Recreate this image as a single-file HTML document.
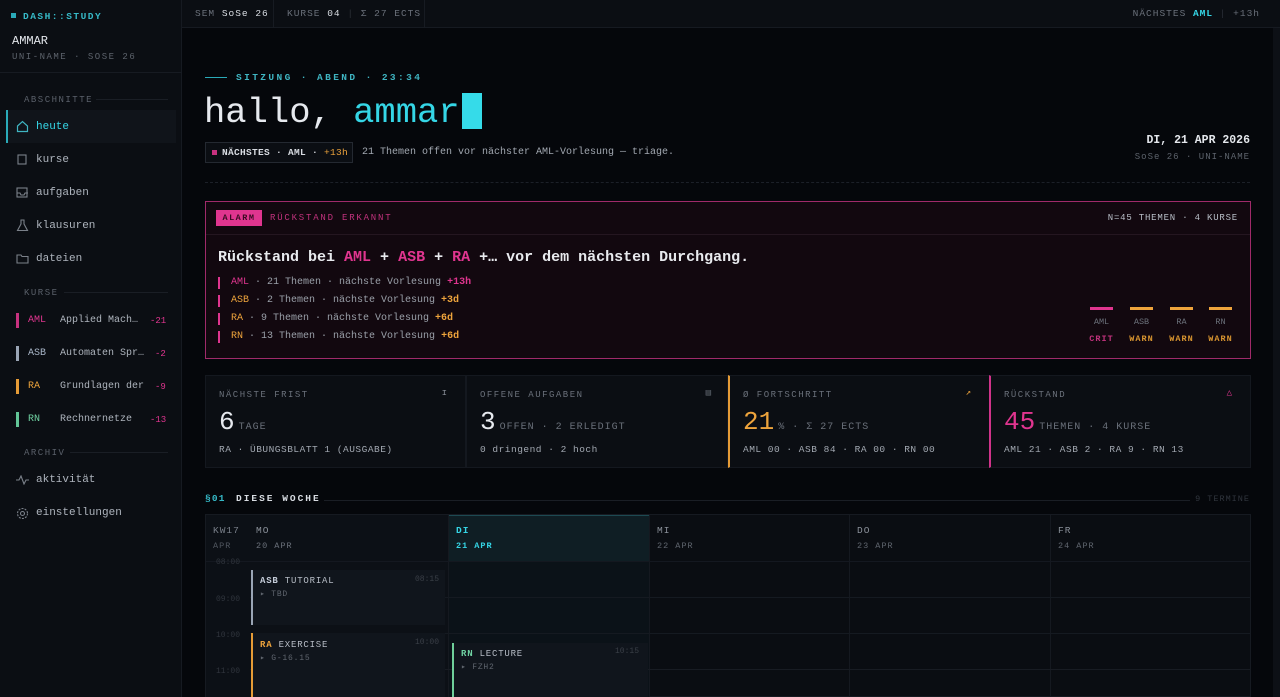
<!DOCTYPE html>
<html><head><meta charset="utf-8"><style>
*{margin:0;padding:0;box-sizing:border-box}
body{width:1280px;height:697px;overflow:hidden;background:#05070b;font-family:"Liberation Mono",monospace;color:#c9ced6;position:relative}
.a{position:absolute;white-space:nowrap}
.sb{left:0;top:0;width:182px;height:697px;background:#0b0e13;border-right:1px solid #161a21}
.lbl{font-size:9px;letter-spacing:1.5px;color:#5a606a}
.nav{font-size:11px;color:#aeb4bd}
.cy{color:#35d6e6}.pk{color:#e0358f}.or{color:#eea43c}.gr{color:#6fd2a2}.gy{color:#8a9099}.dg{color:#5f656e}
.card{background:#0b0e13;border:1px solid #14181f;height:93px;top:375px}
.card .t{position:absolute;left:13px;top:14px;font-size:9px;letter-spacing:1.5px;color:#6a707a}
.card .n{position:absolute;left:13px;top:31px;font-size:26px}
.card .u{font-size:10px;letter-spacing:1px;color:#6a707a;margin-left:4px}
.card .b{position:absolute;left:13px;top:68px;font-size:9.5px;color:#a2a8b1;letter-spacing:.5px}
.ev{background:#10151c;font-size:9px;letter-spacing:.8px}
</style></head><body>
<div class="a sb"></div>
<div class="a" style="left:11px;top:13px;width:5px;height:5px;background:#2aa9b8"></div>
<div class="a cy" style="left:23px;top:11px;font-size:9.5px;letter-spacing:1.5px;font-weight:bold;color:#36b9c7">DASH::STUDY</div>
<div class="a" style="left:12px;top:34px;font-size:12px;color:#e4e7ec">AMMAR</div>
<div class="a lbl" style="left:12px;top:52px;color:#5d636c">UNI-NAME · SOSE 26</div>
<div class="a" style="left:0;top:72px;width:182px;height:1px;background:#171b22"></div>
<div class="a lbl" style="left:24px;top:95px">ABSCHNITTE</div><div class="a" style="left:96px;top:99px;width:72px;height:1px;background:#1a1e25"></div>
<div class="a" style="left:6px;top:110px;width:170px;height:33px;background:#10141a;border-left:2px solid #2aaab8"></div>
<svg class="a" style="left:16px;top:120px" width="13" height="13" viewBox="0 0 13 13" fill="none" stroke="#3fb5c2" stroke-width="1.2"><path d="M1.5 6L6.5 1.5 11.5 6V11.5H1.5Z"/></svg>
<div class="a nav cy" style="left:36px;top:121px">heute</div>
<svg class="a" style="left:17px;top:154px" width="11" height="12" fill="none" stroke="#7b818a" stroke-width="1.1"><rect x="1" y="1" width="8" height="9"/></svg>
<div class="a nav" style="left:36px;top:154px">kurse</div>
<svg class="a" style="left:16px;top:187px" width="13" height="12" fill="none" stroke="#7b818a" stroke-width="1.1"><rect x="1" y="1" width="10" height="9"/><path d="M1 6h3l1 2h3l1-2h3"/></svg>
<div class="a nav" style="left:36px;top:187px">aufgaben</div>
<svg class="a" style="left:16px;top:219px" width="13" height="13" fill="none" stroke="#7b818a" stroke-width="1.1"><path d="M4.5 1h4M5 1v4L1.5 11.5h10L8 5V1"/></svg>
<div class="a nav" style="left:36px;top:220px">klausuren</div>
<svg class="a" style="left:16px;top:253px" width="13" height="12" fill="none" stroke="#7b818a" stroke-width="1.1"><path d="M1 2h4l1 1.5h6V10H1Z"/></svg>
<div class="a nav" style="left:36px;top:253px">dateien</div>
<div class="a lbl" style="left:24px;top:288px">KURSE</div><div class="a" style="left:64px;top:292px;width:104px;height:1px;background:#1a1e25"></div>
<div class="a" style="left:16px;top:313px;width:3px;height:15px;background:#c8317f"></div>
<div class="a pk" style="left:28px;top:315px;font-size:10px">AML</div><div class="a nav" style="left:60px;top:315px;font-size:10px">Applied Mach…</div><div class="a pk" style="left:150px;top:316px;font-size:9px">-21</div>
<div class="a" style="left:16px;top:346px;width:3px;height:15px;background:#9aa5b5"></div>
<div class="a" style="left:28px;top:348px;font-size:10px;color:#a9b6c8">ASB</div><div class="a nav" style="left:60px;top:348px;font-size:10px">Automaten Spr…</div><div class="a pk" style="left:155px;top:349px;font-size:9px">-2</div>
<div class="a" style="left:16px;top:379px;width:3px;height:15px;background:#e59b36"></div>
<div class="a or" style="left:28px;top:381px;font-size:10px">RA</div><div class="a nav" style="left:60px;top:381px;font-size:10px">Grundlagen der</div><div class="a pk" style="left:155px;top:382px;font-size:9px">-9</div>
<div class="a" style="left:16px;top:412px;width:3px;height:15px;background:#62c597"></div>
<div class="a gr" style="left:28px;top:414px;font-size:10px">RN</div><div class="a nav" style="left:60px;top:414px;font-size:10px">Rechnernetze</div><div class="a pk" style="left:150px;top:415px;font-size:9px">-13</div>
<div class="a lbl" style="left:24px;top:448px">ARCHIV</div><div class="a" style="left:70px;top:452px;width:98px;height:1px;background:#1a1e25"></div>
<svg class="a" style="left:16px;top:475px" width="13" height="10" fill="none" stroke="#7b818a" stroke-width="1.1"><path d="M0 5h3l2-4 3 8 2-4h3"/></svg>
<div class="a nav" style="left:36px;top:474px">aktivität</div>
<svg class="a" style="left:16px;top:507px" width="13" height="13" fill="none" stroke="#7b818a" stroke-width="1.1"><circle cx="6.5" cy="6.5" r="2"/><circle cx="6.5" cy="6.5" r="5" stroke-dasharray="2 1.2"/></svg>
<div class="a nav" style="left:36px;top:507px">einstellungen</div>

<!-- topbar -->
<div class="a" style="left:182px;top:0;width:1098px;height:28px;background:#0b0e13;border-bottom:1px solid #161a21"></div>
<div class="a" style="left:195px;top:8px;font-size:9.5px;letter-spacing:1px;color:#6a707a">SEM <span style="color:#d8dce2">SoSe 26</span></div>
<div class="a" style="left:273px;top:0;width:1px;height:28px;background:#171b22"></div>
<div class="a" style="left:287px;top:8px;font-size:9.5px;letter-spacing:1px;color:#6a707a">KURSE <span style="color:#d8dce2">04</span> <span style="color:#2a2f37">|</span> Σ 27 ECTS</div>
<div class="a" style="left:424px;top:0;width:1px;height:28px;background:#171b22"></div>
<div class="a" style="right:20px;top:8px;font-size:9.5px;letter-spacing:1px;color:#6a707a">NÄCHSTES <span class="cy" style="font-weight:bold">AML</span> <span style="color:#2a2f37">|</span> +13h</div>
<div class="a" style="left:1273px;top:28px;width:7px;height:669px;background:#0d1016"></div>

<!-- hero -->
<div class="a" style="left:205px;top:77px;width:22px;height:1px;background:#2aaab8"></div>
<div class="a" style="left:236px;top:72px;font-size:9.5px;letter-spacing:2.4px;color:#3fb5c2;font-weight:bold">SITZUNG · ABEND · 23:34</div>
<div class="a" style="left:204px;top:92px;font-size:35.5px;color:#e6e9ee;letter-spacing:0">hallo, <span class="cy">ammar</span></div>
<div class="a" style="left:462px;top:93px;width:20px;height:36px;background:#35dbe9"></div>
<div class="a" style="left:205px;top:142px;width:148px;height:21px;border:1px solid #242931;background:#0b0e13"></div>
<div class="a" style="left:212px;top:150px;width:5px;height:5px;background:#c8317f"></div>
<div class="a" style="left:222px;top:147px;font-size:9.5px;color:#d8dce2;font-weight:bold;letter-spacing:.3px">NÄCHSTES · AML · <span class="or" style="font-weight:normal">+13h</span></div>
<div class="a" style="left:362px;top:147px;font-size:10px;color:#a2a8b1">21 Themen offen vor nächster AML-Vorlesung — triage.</div>
<div class="a" style="right:30px;top:134px;font-size:11.5px;color:#e4e7ec;font-weight:bold">DI, 21 APR 2026</div>
<div class="a" style="right:30px;top:152px;font-size:9px;letter-spacing:1px;color:#5d636c">SoSe 26 · UNI-NAME</div>
<div class="a" style="left:205px;top:182px;width:1045px;height:0;border-top:1px dashed #1c2028"></div>

<!-- alarm -->
<div class="a" style="left:205px;top:201px;width:1046px;height:158px;border:1px solid #a02a6a;background:#12080f"></div>
<div class="a" style="left:206px;top:234px;width:1044px;height:1px;background:#241620"></div>
<div class="a" style="left:216px;top:210px;width:46px;height:16px;background:#e0358f;font-size:8.5px;letter-spacing:1.5px;color:#3a0a22;text-align:center;line-height:16px;font-weight:bold">ALARM</div>
<div class="a" style="left:270px;top:213px;font-size:9px;letter-spacing:1.8px;color:#c0327c">RÜCKSTAND ERKANNT</div>
<div class="a" style="right:42px;top:213px;font-size:9px;letter-spacing:.8px;color:#b8bec7">N=45 THEMEN · 4 KURSE</div>
<div class="a" style="left:218px;top:249px;font-size:15px;font-weight:bold;color:#e8eaee">Rückstand bei <span class="pk">AML</span> + <span class="pk">ASB</span> + <span class="pk">RA</span> +… vor dem nächsten Durchgang.</div>
<div class="a" style="left:218px;top:277px;width:2px;height:12px;background:#e0358f"></div>
<div class="a" style="left:231px;top:277px;font-size:10px;color:#9aa0a9"><span class="pk">AML</span> · 21 Themen · nächste Vorlesung <span class="pk" style="font-weight:bold">+13h</span></div>
<div class="a" style="left:218px;top:295px;width:2px;height:12px;background:#e0358f"></div>
<div class="a" style="left:231px;top:295px;font-size:10px;color:#9aa0a9"><span class="or">ASB</span> · 2 Themen · nächste Vorlesung <span class="or" style="font-weight:bold">+3d</span></div>
<div class="a" style="left:218px;top:313px;width:2px;height:12px;background:#e0358f"></div>
<div class="a" style="left:231px;top:313px;font-size:10px;color:#9aa0a9"><span class="or">RA</span> · 9 Themen · nächste Vorlesung <span class="or" style="font-weight:bold">+6d</span></div>
<div class="a" style="left:218px;top:331px;width:2px;height:12px;background:#e0358f"></div>
<div class="a" style="left:231px;top:331px;font-size:10px;color:#9aa0a9"><span class="or">RN</span> · 13 Themen · nächste Vorlesung <span class="or" style="font-weight:bold">+6d</span></div>
<div class="a" style="left:1090px;top:307px;width:23px;height:3px;background:#e0358f"></div>
<div class="a" style="left:1130px;top:307px;width:23px;height:3px;background:#eea43c"></div>
<div class="a" style="left:1170px;top:307px;width:23px;height:3px;background:#eea43c"></div>
<div class="a" style="left:1209px;top:307px;width:23px;height:3px;background:#eea43c"></div>
<div class="a" style="left:1090px;top:317px;width:23px;text-align:center;font-size:8.5px;color:#6a707a">AML</div>
<div class="a" style="left:1130px;top:317px;width:23px;text-align:center;font-size:8.5px;color:#6a707a">ASB</div>
<div class="a" style="left:1170px;top:317px;width:23px;text-align:center;font-size:8.5px;color:#6a707a">RA</div>
<div class="a" style="left:1209px;top:317px;width:23px;text-align:center;font-size:8.5px;color:#6a707a">RN</div>
<div class="a pk" style="left:1086px;top:334px;width:31px;text-align:center;font-size:8.5px;letter-spacing:1px;font-weight:bold;color:#c0327c">CRIT</div>
<div class="a or" style="left:1126px;top:334px;width:31px;text-align:center;font-size:8.5px;letter-spacing:1px;font-weight:bold;color:#d89530">WARN</div>
<div class="a or" style="left:1166px;top:334px;width:31px;text-align:center;font-size:8.5px;letter-spacing:1px;font-weight:bold;color:#d89530">WARN</div>
<div class="a or" style="left:1205px;top:334px;width:31px;text-align:center;font-size:8.5px;letter-spacing:1px;font-weight:bold;color:#d89530">WARN</div>

<!-- cards -->
<div class="a card" style="left:205px;width:261px"><div class="t">NÄCHSTE FRIST</div><div class="a" style="right:18px;top:12px;font-size:9px;color:#8a9099">ɪ</div><div class="n" style="color:#e6e9ee">6<span class="u">TAGE</span></div><div class="b">RA · ÜBUNGSBLATT 1 (AUSGABE)</div></div>
<div class="a card" style="left:466px;width:262px"><div class="t">OFFENE AUFGABEN</div><div class="a" style="right:16px;top:12px;font-size:9px;color:#5f656e">▤</div><div class="n" style="color:#e6e9ee">3<span class="u">OFFEN · 2 ERLEDIGT</span></div><div class="b">0 dringend · 2 hoch</div></div>
<div class="a card" style="left:728px;width:262px;border-left:2px solid #e59b36"><div class="t">Ø FORTSCHRITT</div><div class="a or" style="right:18px;top:12px;font-size:9px">↗</div><div class="n or">21<span class="u">% · Σ 27 ECTS</span></div><div class="b">AML 00 · ASB 84 · RA 00 · RN 00</div></div>
<div class="a card" style="left:989px;width:262px;border-left:2px solid #d0338a"><div class="t">RÜCKSTAND</div><div class="a pk" style="right:18px;top:12px;font-size:9px">△</div><div class="n pk">45<span class="u">THEMEN · 4 KURSE</span></div><div class="b">AML 21 · ASB 2 · RA 9 · RN 13</div></div>

<!-- week -->
<div class="a cy" style="left:205px;top:493px;font-size:9.5px;font-weight:bold;letter-spacing:1.2px;color:#35b8c6">§01</div>
<div class="a" style="left:236px;top:493px;font-size:9.5px;font-weight:bold;letter-spacing:2px;color:#d8dce2">DIESE WOCHE</div>
<div class="a" style="left:324px;top:500px;width:866px;height:1px;background:#1a1e25"></div>
<div class="a" style="right:30px;top:494px;font-size:8.5px;letter-spacing:1px;color:#30353d">9 TERMINE</div>

<div class="a" style="left:205px;top:514px;width:1046px;height:183px;background:#0a0d12;border:1px solid #161a21"></div>
<div class="a" style="left:206px;top:515px;width:44px;height:182px;background:#0c1016"></div>
<div class="a" style="left:250px;top:515px;width:198px;height:182px;background:#0c1016"></div>
<div class="a" style="left:448px;top:515px;width:201px;height:182px;background:#0b1218"></div>
<div class="a" style="left:448px;top:515px;width:201px;height:46px;background:#0f1e24;border-top:1px solid #1d4a52"></div>
<div class="a" style="left:649px;top:515px;width:1px;height:182px;background:#151920"></div>
<div class="a" style="left:849px;top:515px;width:1px;height:182px;background:#151920"></div>
<div class="a" style="left:1050px;top:515px;width:1px;height:182px;background:#151920"></div>
<div class="a" style="left:448px;top:515px;width:1px;height:182px;background:#151920"></div>
<div class="a" style="left:206px;top:561px;width:1044px;height:1px;background:#141820"></div>
<div class="a" style="left:250px;top:597px;width:1000px;height:1px;background:#151a21"></div>
<div class="a" style="left:250px;top:633px;width:1000px;height:1px;background:#151a21"></div>
<div class="a" style="left:250px;top:669px;width:1000px;height:1px;background:#181c23"></div>
<div class="a" style="left:213px;top:525px;font-size:9.5px;letter-spacing:1px;color:#7a808a">KW17</div>
<div class="a" style="left:213px;top:541px;font-size:8.5px;letter-spacing:1px;color:#50565f">APR</div>
<div class="a" style="left:256px;top:525px;font-size:9.5px;letter-spacing:1px;color:#8a9099">MO</div>
<div class="a" style="left:256px;top:541px;font-size:8.5px;letter-spacing:1px;color:#6a707a">20 APR</div>
<div class="a cy" style="left:456px;top:525px;font-size:9.5px;letter-spacing:1px;font-weight:bold">DI</div>
<div class="a cy" style="left:456px;top:541px;font-size:8.5px;letter-spacing:1px;font-weight:bold">21 APR</div>
<div class="a" style="left:657px;top:525px;font-size:9.5px;letter-spacing:1px;color:#8a9099">MI</div>
<div class="a" style="left:657px;top:541px;font-size:8.5px;letter-spacing:1px;color:#5f656e">22 APR</div>
<div class="a" style="left:857px;top:525px;font-size:9.5px;letter-spacing:1px;color:#8a9099">DO</div>
<div class="a" style="left:857px;top:541px;font-size:8.5px;letter-spacing:1px;color:#5f656e">23 APR</div>
<div class="a" style="left:1058px;top:525px;font-size:9.5px;letter-spacing:1px;color:#8a9099">FR</div>
<div class="a" style="left:1058px;top:541px;font-size:8.5px;letter-spacing:1px;color:#5f656e">24 APR</div>
<div class="a" style="left:216px;top:558px;font-size:8px;color:#30353d">08:00</div>
<div class="a" style="left:216px;top:595px;font-size:8px;color:#30353d">09:00</div>
<div class="a" style="left:216px;top:631px;font-size:8px;color:#30353d">10:00</div>
<div class="a" style="left:216px;top:667px;font-size:8px;color:#30353d">11:00</div>

<div class="a ev" style="left:251px;top:570px;width:194px;height:55px;border-left:2px solid #9aa5b5"></div>
<div class="a" style="left:260px;top:576px;font-size:9px;letter-spacing:.8px;color:#b6bcc5"><b style="color:#c4ccd8">ASB</b> TUTORIAL</div>
<div class="a" style="left:415px;top:575px;font-size:8px;color:#3a3f47">08:15</div>
<div class="a" style="left:260px;top:589px;font-size:8px;letter-spacing:.8px;color:#5f656e">▸ TBD</div>
<div class="a ev" style="left:251px;top:633px;width:194px;height:64px;border-left:2px solid #e59b36"></div>
<div class="a" style="left:260px;top:640px;font-size:9px;letter-spacing:.8px;color:#b6bcc5"><b class="or">RA</b> EXERCISE</div>
<div class="a" style="left:415px;top:638px;font-size:8px;color:#3a3f47">10:00</div>
<div class="a" style="left:260px;top:653px;font-size:8px;letter-spacing:.8px;color:#5f656e">▸ G-16.15</div>
<div class="a ev" style="left:452px;top:643px;width:196px;height:54px;border-left:2px solid #6fcf9a"></div>
<div class="a" style="left:461px;top:649px;font-size:9px;letter-spacing:.8px;color:#b6bcc5"><b class="gr">RN</b> LECTURE</div>
<div class="a" style="left:615px;top:647px;font-size:8px;color:#3a3f47">10:15</div>
<div class="a" style="left:461px;top:662px;font-size:8px;letter-spacing:.8px;color:#5f656e">▸ FZH2</div>
</body></html>
